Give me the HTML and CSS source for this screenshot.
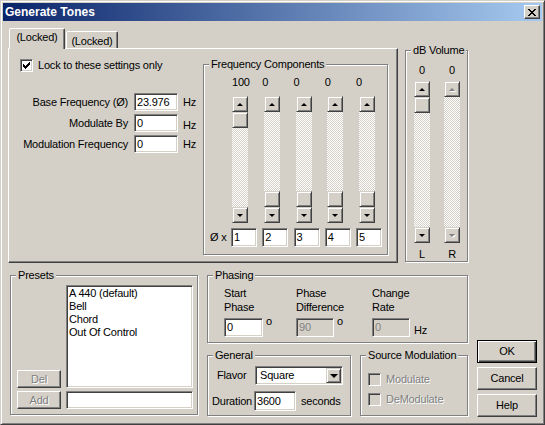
FILE: index.html
```html
<!DOCTYPE html>
<html>
<head>
<meta charset="utf-8">
<title>Generate Tones</title>
<link rel="stylesheet" href="styles.css">
</head>
<body>
<div class="window">
  <div class="titlebar">
    <span class="title">Generate Tones</span>
    <span class="close"><svg width="8" height="7" viewBox="0 0 8 7" shape-rendering="crispEdges"><path d="M0 0h2v1h1v1h2V1h1V0h2v1H7v1H6v1H5v1h1v1h1v1h1v1H6V6H5V5H3v1H2v1H0V6h1V5h1V4h1V3H2V2H1V1H0z" fill="#000"/></svg></span>
  </div>
  <div class="client">
    <div class="top">
      <div class="tabctl">
        <div class="tabrow">
          <div class="tab sel">(Locked)</div>
          <div class="tab">(Locked)</div>
        </div>
        <div class="panel">
          <div class="leftcol">
            <div class="chkrow">
              <span class="chk"><svg width="7" height="7" viewBox="0 0 7 7" shape-rendering="crispEdges"><path d="M0 2h1v1h1v1h1V3h1V2h1V1h1V0h1v3H6v1H5v1H4v1H3v1H2V6H1V5H0z" fill="#000"/></svg></span>
              <span>Lock to these settings only</span>
            </div>
            <div class="frow r1"><span class="flabel">Base Frequency (Ø)</span><span class="field fw">23.976</span><span class="unit">Hz</span></div>
            <div class="frow r2"><span class="flabel">Modulate By</span><span class="field fw">0</span><span class="unit low">Hz</span></div>
            <div class="frow r3"><span class="flabel">Modulation Frequency</span><span class="field fw">0</span><span class="unit">Hz</span></div>
          </div>
          <div class="group freq">
            <div class="gtitle">Frequency Components</div>
            <div class="cgrid vals">
              <span></span><span class="first">100</span><span>0</span><span>0</span><span>0</span><span>0</span>
            </div>
            <div class="sgrid">
              <div class="vscroll"><div class="sbtn"><span class="arr up"></span></div><div class="sbtn thumb"></div><div class="track"></div><div class="sbtn"><span class="arr down"></span></div></div>
              <div class="vscroll"><div class="sbtn"><span class="arr up"></span></div><div class="track"></div><div class="sbtn thumb"></div><div class="sbtn"><span class="arr down"></span></div></div>
              <div class="vscroll"><div class="sbtn"><span class="arr up"></span></div><div class="track"></div><div class="sbtn thumb"></div><div class="sbtn"><span class="arr down"></span></div></div>
              <div class="vscroll"><div class="sbtn"><span class="arr up"></span></div><div class="track"></div><div class="sbtn thumb"></div><div class="sbtn"><span class="arr down"></span></div></div>
              <div class="vscroll"><div class="sbtn"><span class="arr up"></span></div><div class="track"></div><div class="sbtn thumb"></div><div class="sbtn"><span class="arr down"></span></div></div>
            </div>
            <div class="cgrid ins">
              <span class="ox">Ø x</span>
              <span class="field">1</span><span class="field">2</span><span class="field">3</span><span class="field">4</span><span class="field">5</span>
            </div>
          </div>
        </div>
      </div>
      <div class="group db">
        <div class="gtitle">dB Volume</div>
        <div class="dgrid dvals"><span>0</span><span>0</span></div>
        <div class="dgrid dscroll">
          <div class="vscroll tall"><div class="sbtn"><span class="arr up"></span></div><div class="sbtn thumb"></div><div class="track"></div><div class="sbtn"><span class="arr down"></span></div></div>
          <div class="vscroll tall"><div class="sbtn"><span class="arr up dis"></span></div><div class="track"></div><div class="sbtn"><span class="arr down dis"></span></div></div>
        </div>
        <div class="dgrid dlr"><span>L</span><span>R</span></div>
      </div>
    </div>
    <div class="bottom">
      <div class="group presets">
        <div class="gtitle">Presets</div>
        <div class="pgrid">
          <div class="btn dis del">Del</div>
          <div class="listbox">
            <div>A 440 (default)</div>
            <div>Bell</div>
            <div>Chord</div>
            <div>Out Of Control</div>
          </div>
          <div class="btn dis add">Add</div>
          <div class="field pin"></div>
        </div>
      </div>
      <div class="midcol">
        <div class="group phasing">
          <div class="gtitle">Phasing</div>
          <div class="phgrid">
            <div class="phcell">
              <div class="phlabel">Start<br>Phase</div>
              <div class="phrow"><span class="field ph1">0</span><span class="deg">o</span></div>
            </div>
            <div class="phcell">
              <div class="phlabel">Phase<br>Difference</div>
              <div class="phrow"><span class="field disf ph2">90</span><span class="deg">o</span></div>
            </div>
            <div class="phcell">
              <div class="phlabel">Change<br>Rate</div>
              <div class="phrow"><span class="field disf ph3">0</span><span class="hz">Hz</span></div>
            </div>
          </div>
        </div>
        <div class="lowrow">
          <div class="group general">
            <div class="gtitle">General</div>
            <div class="grow g1">
              <span class="glabel lf">Flavor</span>
              <span class="field select"><span class="seltext">Square</span><span class="sbtn ddbtn"><span class="arr down big"></span></span></span>
            </div>
            <div class="grow g2">
              <span class="glabel ld">Duration</span>
              <span class="field dur">3600</span>
              <span class="secs">seconds</span>
            </div>
          </div>
          <div class="group source">
            <div class="gtitle">Source Modulation</div>
            <div class="srow s1"><span class="chk off"></span><span class="distext">Modulate</span></div>
            <div class="srow s2"><span class="chk off"></span><span class="distext">DeModulate</span></div>
          </div>
        </div>
      </div>
      <div class="btncol">
        <div class="btn default">OK</div>
        <div class="btn">Cancel</div>
        <div class="btn">Help</div>
      </div>
    </div>
  </div>
</div>
</body>
</html>
```
FILE: styles.css
```css
* { box-sizing: border-box; }
html, body { margin: 0; padding: 0; }
body {
  font-family: "Liberation Sans", Arial, sans-serif;
  font-size: 11px;
  line-height: 13px;
  letter-spacing: -0.2px;
  color: #000;
  background: #D4D0C8;
}
.window {
  width: 545px;
  height: 425px;
  background: #D4D0C8;
  border: 1px solid;
  border-color: #D4D0C8 #404040 #404040 #D4D0C8;
  box-shadow: inset 1px 1px #fff, inset -1px -1px #808080;
  padding: 2px;
  display: flex;
  flex-direction: column;
}
.titlebar {
  height: 18px;
  flex: none;
  background: linear-gradient(to right, #0A246A, #A6CAF0);
  display: flex;
  align-items: center;
  justify-content: space-between;
  padding: 0 2px;
  color: #fff;
  font-weight: bold;
  font-size: 12px;
  letter-spacing: 0;
}
.close {
  width: 16px;
  height: 14px;
  background: #D4D0C8;
  border: 1px solid;
  border-color: #fff #404040 #404040 #fff;
  box-shadow: inset -1px -1px #808080;
  display: flex;
  align-items: center;
  justify-content: center;
  padding-right: 1px;
}
.close svg { display: block; }
.client { flex: 1; }

/* raised / sunken */
.sbtn {
  background: #D4D0C8;
  border: 1px solid;
  border-color: #D4D0C8 #404040 #404040 #D4D0C8;
  box-shadow: inset 1px 1px #fff, inset -1px -1px #808080;
  display: flex;
  align-items: center;
  justify-content: center;
}
.field {
  display: flex;
  align-items: center;
  height: 18px;
  background: #fff;
  border: 1px solid;
  border-color: #808080 #fff #fff #808080;
  box-shadow: inset 1px 1px #404040, inset -1px -1px #D4D0C8;
  padding: 0 2px;
  white-space: nowrap;
}
.field.disf { background: #D4D0C8; color: #808080; }

/* top */
.top {
  display: flex;
  align-items: flex-start;
  margin-top: 7px;
  padding-left: 5px;
}
.tabctl { width: 390px; }
.tabrow {
  display: flex;
  align-items: flex-end;
  height: 20px;
  padding-left: 1px;
}
.tab {
  background: #D4D0C8;
  border-style: solid;
  border-width: 1px 1px 0 1px;
  border-color: #fff #404040 transparent #fff;
  box-shadow: inset -1px 0 #808080;
  border-radius: 2px 2px 0 0;
  text-align: center;
}
.tab.sel {
  width: 56px;
  height: 21px;
  margin-bottom: -1px;
  padding-top: 2px;
  position: relative;
  z-index: 1;
}
.tab:not(.sel) {
  width: 52px;
  height: 17px;
  margin-left: 1px;
  padding-top: 3px;
}
.panel {
  height: 215px;
  border: 1px solid;
  border-color: #fff #404040 #404040 #fff;
  box-shadow: inset -1px -1px #808080;
  display: flex;
  align-items: flex-start;
}
.leftcol { width: 194px; flex: none; }
.chkrow {
  display: flex;
  align-items: center;
  gap: 5px;
  margin-top: 10px;
  padding-left: 11px;
}
.chk {
  width: 13px;
  height: 13px;
  flex: none;
  background: #fff;
  border: 1px solid;
  border-color: #808080 #fff #fff #808080;
  box-shadow: inset 1px 1px #404040, inset -1px -1px #D4D0C8;
  display: flex;
  align-items: center;
  justify-content: center;
}
.chk svg { display: block; }
.chk.off { background: #D4D0C8; }
.frow {
  display: flex;
  align-items: center;
  height: 18px;
}
.frow.r1 { margin-top: 21px; }
.frow.r2 { margin-top: 3px; }
.frow.r3 { margin-top: 3px; }
.flabel { width: 119px; text-align: right; white-space: nowrap; }
.fw { width: 44px; margin-left: 6px; }
.unit { margin-left: 5px; }
.unit.low { align-self: flex-end; }

/* group boxes */
.group {
  border: 1px solid #808080;
  box-shadow: inset 1px 1px #fff, 1px 1px #fff;
  flex: none;
}
.gtitle {
  width: fit-content;
  margin: -7px 0 0 5px;
  padding: 0 2px;
  height: 13px;
  line-height: 13px;
  background: #D4D0C8;
  white-space: nowrap;
}
.freq {
  width: 185px;
  height: 191px;
  margin-top: 15px;
}
.cgrid {
  display: grid;
  grid-template-columns: 15.75px repeat(5, 26px);
  column-gap: 5.25px;
  padding-left: 6px;
}
.vals { margin-top: 5px; height: 13px; }
.vals .first { padding-left: 1px; }
.sgrid {
  display: grid;
  grid-template-columns: repeat(5, 16px);
  column-gap: 15.75px;
  padding-left: 28px;
  margin-top: 7px;
}
.ins { margin-top: 5px; align-items: center; }
.ins .field { height: 19px; }
.ox { white-space: nowrap; }

.vscroll {
  width: 16px;
  height: 127px;
  display: flex;
  flex-direction: column;
}
.vscroll.tall { height: 162px; }
.vscroll .sbtn { height: 16px; flex: none; }
.track {
  flex: 1;
  background-color: #fff;
  background-image: repeating-conic-gradient(#D4D0C8 0 25%, #fff 0 50%);
  background-size: 2px 2px;
}
.arr {
  width: 0;
  height: 0;
  border-left: 3px solid transparent;
  border-right: 3px solid transparent;
}
.arr.up { border-bottom: 3px solid #000; }
.arr.down { border-top: 3px solid #000; }
.arr.up.dis { border-bottom-color: #808080; filter: drop-shadow(1px 1px 0 #fff); }
.arr.down.dis { border-top-color: #808080; filter: drop-shadow(1px 1px 0 #fff); }
.arr.big { border-left-width: 4px; border-right-width: 4px; border-top-width: 4px; }

.db {
  width: 63px;
  height: 212px;
  margin-left: 7px;
  margin-top: 22px;
}
.dgrid {
  display: grid;
  grid-template-columns: 16px 16px;
  column-gap: 14px;
  padding-left: 8px;
  text-align: center;
}
.dvals { margin-top: 7px; height: 13px; }
.dvals span, .dlr span { display: flex; justify-content: center; }
.dscroll { margin-top: 4px; }
.dlr { margin-top: 5px; height: 13px; }

/* bottom */
.bottom {
  display: flex;
  align-items: flex-start;
  margin-top: 12px;
  padding-left: 7px;
}
.presets { width: 188px; height: 140px; }
.pgrid {
  display: grid;
  grid-template-columns: 44px 127px;
  grid-template-rows: 103px 18px;
  column-gap: 5px;
  row-gap: 3px;
  padding-left: 6px;
  margin-top: 3px;
}
.btn {
  display: flex;
  align-items: center;
  justify-content: center;
  background: #D4D0C8;
  border: 1px solid;
  border-color: #fff #404040 #404040 #fff;
  box-shadow: inset -1px -1px #808080;
}
.btn.dis { color: #808080; text-shadow: 1px 1px 0 #fff; }
.del { align-self: end; height: 18px; }
.add { height: 18px; }
.listbox {
  background: #fff;
  border: 1px solid;
  border-color: #808080 #fff #fff #808080;
  box-shadow: inset 1px 1px #404040, inset -1px -1px #D4D0C8;
  padding: 1px 2px;
  white-space: nowrap;
}
.pin { height: 18px; }

.midcol { width: 261px; margin-left: 9px; flex: none; }
.phasing { width: 261px; height: 68px; }
.phgrid {
  display: grid;
  grid-template-columns: 72px 76px 1fr;
  padding-left: 16px;
  margin-top: 4px;
}
.phlabel { line-height: 14px; height: 28px; }
.phrow { display: flex; margin-top: 4px; }
.phrow .field { height: 19px; }
.ph1 { width: 39px; }
.ph2 { width: 38px; }
.ph3 { width: 38px; }
.deg { margin-left: 3px; line-height: 11px; margin-top: -2px; align-self: flex-start; }
.hz { margin-left: 4px; align-self: flex-end; }

.lowrow { display: flex; margin-top: 12px; }
.general { width: 144px; height: 61px; }
.grow { display: flex; align-items: center; }
.g1 { margin-top: 4px; padding-left: 9px; }
.g2 { margin-top: 6px; padding-left: 4px; }
.lf { width: 38px; }
.ld { width: 42px; }
.select {
  width: 88px;
  height: 19px;
  padding: 0 2px 0 2px;
  justify-content: space-between;
}
.seltext { padding-left: 2px; }
.ddbtn { width: 15px; height: 15px; margin-right: -1px; }
.dur { width: 42px; height: 20px; }
.secs { margin-left: 5px; }

.source { width: 108px; height: 61px; margin-left: 9px; }
.srow { display: flex; align-items: center; gap: 5px; padding-left: 7px; }
.s1 { margin-top: 11px; }
.s2 { margin-top: 7px; }
.distext { color: #808080; text-shadow: 1px 1px 0 #fff; }

.btncol {
  width: 60px;
  margin-left: 9px;
  margin-top: 65px;
  display: flex;
  flex-direction: column;
  gap: 4px;
  flex: none;
}
.btncol .btn { height: 23px; }
.btn.default {
  border: 1px solid #000;
  box-shadow: inset 1px 1px #fff, inset -1px -1px #404040, inset -2px -2px #808080;
}
```
